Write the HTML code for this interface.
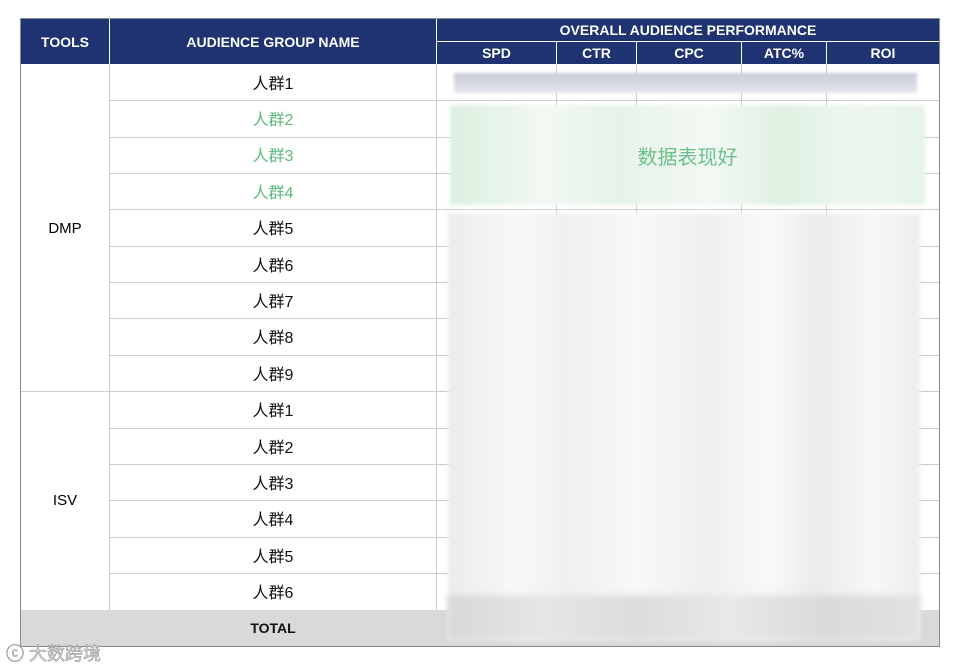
<!DOCTYPE html>
<html><head><meta charset="utf-8"><style>
body{margin:0;width:961px;height:670px;background:#fff;position:relative;overflow:hidden;font-family:"Liberation Sans","Noto Sans CJK SC",sans-serif}
.a{position:absolute}
.hd{background:#1f3372;color:#fff;font-weight:bold;font-size:14px;display:flex;align-items:center;justify-content:center}
.hl{position:absolute;background:#c8ccd8}
.cell{position:absolute;left:110px;width:326px;height:36px;display:flex;align-items:center;justify-content:center;font-size:16px;color:#111}
.g{color:#5cba7a}
</style></head><body>
<div class="a" style="left:20px;top:18px;width:920px;height:629px;border:1px solid #8a8a8a;box-sizing:border-box"></div>
<div class="a hd" style="left:21px;top:19px;width:88px;height:45px">TOOLS</div>
<div class="a hd" style="left:110px;top:19px;width:326px;height:45px">AUDIENCE GROUP NAME</div>
<div class="a hd" style="left:437px;top:19px;width:502px;height:22px">OVERALL AUDIENCE PERFORMANCE</div>
<div class="a hd" style="left:437px;top:42px;width:119px;height:22px">SPD</div>
<div class="a hd" style="left:557px;top:42px;width:79px;height:22px">CTR</div>
<div class="a hd" style="left:637px;top:42px;width:104px;height:22px">CPC</div>
<div class="a hd" style="left:742px;top:42px;width:84px;height:22px">ATC%</div>
<div class="a hd" style="left:827px;top:42px;width:112px;height:22px">ROI</div>
<!-- vertical lines body -->
<div class="hl" style="left:109px;top:64px;width:1px;height:546px"></div>
<div class="hl" style="left:436px;top:64px;width:1px;height:546px"></div>
<div class="hl" style="left:556px;top:64px;width:1px;height:546px"></div>
<div class="hl" style="left:636px;top:64px;width:1px;height:546px"></div>
<div class="hl" style="left:741px;top:64px;width:1px;height:546px"></div>
<div class="hl" style="left:826px;top:64px;width:1px;height:546px"></div>
<!-- horizontal lines -->
<div class="hl" style="left:110px;top:100px;width:829px;height:1px"></div>
<div class="hl" style="left:110px;top:137px;width:829px;height:1px"></div>
<div class="hl" style="left:110px;top:173px;width:829px;height:1px"></div>
<div class="hl" style="left:110px;top:209px;width:829px;height:1px"></div>
<div class="hl" style="left:110px;top:246px;width:829px;height:1px"></div>
<div class="hl" style="left:110px;top:282px;width:829px;height:1px"></div>
<div class="hl" style="left:110px;top:318px;width:829px;height:1px"></div>
<div class="hl" style="left:110px;top:355px;width:829px;height:1px"></div>
<div class="hl" style="left:21px;top:391px;width:918px;height:1px"></div>
<div class="hl" style="left:110px;top:428px;width:829px;height:1px"></div>
<div class="hl" style="left:110px;top:464px;width:829px;height:1px"></div>
<div class="hl" style="left:110px;top:500px;width:829px;height:1px"></div>
<div class="hl" style="left:110px;top:537px;width:829px;height:1px"></div>
<div class="hl" style="left:110px;top:573px;width:829px;height:1px"></div>
<div class="a" style="left:21px;top:610px;width:918px;height:36px;background:#d9d9d9"></div>
<div class="a" style="left:110px;top:610px;width:326px;height:36px;display:flex;align-items:center;justify-content:center;font-weight:bold;font-size:14px;color:#111">TOTAL</div>
<div class="a" style="left:21px;top:210px;width:88px;height:36px;display:flex;align-items:center;justify-content:center;font-size:15px">DMP</div>
<div class="a" style="left:21px;top:482px;width:88px;height:36px;display:flex;align-items:center;justify-content:center;font-size:15px">ISV</div>
<div class="cell" style="top:64px">人群1</div>
<div class="cell g" style="top:100px">人群2</div>
<div class="cell g" style="top:136px">人群3</div>
<div class="cell g" style="top:173px">人群4</div>
<div class="cell" style="top:209px">人群5</div>
<div class="cell" style="top:246px">人群6</div>
<div class="cell" style="top:282px">人群7</div>
<div class="cell" style="top:318px">人群8</div>
<div class="cell" style="top:355px">人群9</div>
<div class="cell" style="top:391px">人群1</div>
<div class="cell" style="top:428px">人群2</div>
<div class="cell" style="top:464px">人群3</div>
<div class="cell" style="top:500px">人群4</div>
<div class="cell" style="top:537px">人群5</div>
<div class="cell" style="top:573px">人群6</div>
<!-- blurred overlays -->
<div class="a" style="left:454px;top:73px;width:463px;height:20px;background:linear-gradient(#c9cad6,#e6e7ee);filter:blur(1.5px)"></div>
<div class="a" style="left:450px;top:105px;width:475px;height:100px;background:linear-gradient(90deg,#dcefe0,#f2f9f3 20%,#e6f3e8 35%,#f3f9f4 55%,#dff0e2 70%,#eef7ef 85%,#e6f3e8);filter:blur(2px)"></div>
<div class="a" style="left:450px;top:105px;width:475px;height:100px;display:flex;align-items:center;justify-content:center;color:#6cc08a;font-size:20px">数据表现好</div>
<div class="a" style="left:448px;top:213px;width:472px;height:427px;background:linear-gradient(90deg,#ececec,#f8f8f8 15%,#f0f0f0 25%,#f8f8f8 40%,#efefef 55%,#f9f9f9 68%,#ebebeb 78%,#f7f7f7 90%,#eeeeee);filter:blur(2px)"></div>
<div class="a" style="left:448px;top:595px;width:472px;height:45px;background:linear-gradient(90deg,#d8d8d8,#e6e6e6 20%,#dcdcdc 40%,#e8e8e8 60%,#dadada 80%,#e2e2e2);filter:blur(3px)"></div>
<div class="a" style="left:6px;top:640px;font-size:18px;color:#ddd;-webkit-text-stroke:0.6px #999">ⓒ 大数跨境</div>
</body></html>
